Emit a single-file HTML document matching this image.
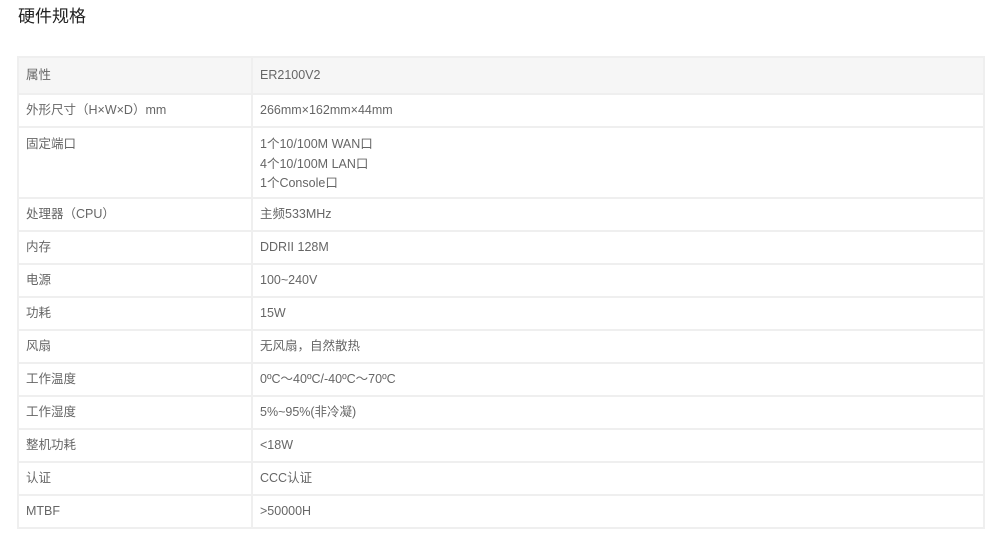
<!DOCTYPE html>
<html><head><meta charset="utf-8"><style>
body{margin:0;background:#fff;font-family:"Liberation Sans","Noto Sans CJK SC",sans-serif;}
h1{position:absolute;left:18px;top:6px;margin:0;font-size:17px;font-weight:normal;color:#222;line-height:22px;}
table{position:absolute;left:17px;top:56px;width:968px;border-collapse:collapse;font-size:12.5px;color:#666;}
td{border:2px solid #efefef;padding:1px 0 0 7px;height:30px;vertical-align:middle;line-height:19.5px;}
td:first-child{width:225px;}
tr.h td{background:#f6f6f6;height:34px;}
tr.t td{vertical-align:top;padding-top:7px;height:62px;}
</style></head><body>
<h1>硬件规格</h1>
<table>
<tr class="h"><td>属性</td><td>ER2100V2</td></tr>
<tr><td>外形尺寸（H×W×D）mm</td><td>266mm×162mm×44mm</td></tr>
<tr class="t"><td>固定端口</td><td>1个10/100M WAN口<br>4个10/100M LAN口<br>1个Console口</td></tr>
<tr><td>处理器（CPU）</td><td>主频533MHz</td></tr>
<tr><td>内存</td><td>DDRII 128M</td></tr>
<tr><td>电源</td><td>100~240V</td></tr>
<tr><td>功耗</td><td>15W</td></tr>
<tr><td>风扇</td><td>无风扇，自然散热</td></tr>
<tr><td>工作温度</td><td>0ºC～40ºC/-40ºC～70ºC</td></tr>
<tr><td>工作湿度</td><td>5%~95%(非冷凝)</td></tr>
<tr><td>整机功耗</td><td>&lt;18W</td></tr>
<tr><td>认证</td><td>CCC认证</td></tr>
<tr><td>MTBF</td><td>&gt;50000H</td></tr>
</table>
</body></html>
